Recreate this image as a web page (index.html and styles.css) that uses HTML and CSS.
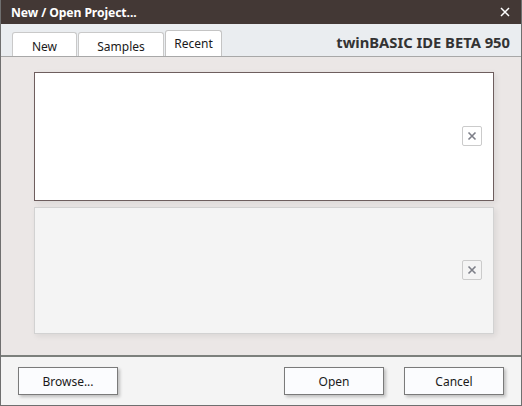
FILE: index.html
```html
<!DOCTYPE html>
<html>
<head>
<meta charset="utf-8">
<link rel="stylesheet" href="styles.css">
</head>
<body>
<div class="window">
  <div class="titlebar">
    <span class="title">New / Open Project...</span>
    <span class="close">
      <svg width="10" height="10" viewBox="0 0 10 10"><path d="M1 1L9 9M9 1L1 9" stroke="#fff" stroke-width="1.5" fill="none"/></svg>
    </span>
  </div>
  <div class="tabstrip">
    <div class="tabs">
      <div class="tab tab-new">New</div>
      <div class="tab tab-samples">Samples</div>
      <div class="tab tab-recent active">Recent</div>
    </div>
    <div class="brand">twinBASIC IDE BETA 950</div>
  </div>
  <div class="content">
    <div class="card selected">
      <div class="remove"><svg width="10" height="10" viewBox="0 0 10 10"><path d="M1.5 1.5L8.5 8.5M8.5 1.5L1.5 8.5" stroke="#7d7f88" stroke-width="1.6" fill="none"/></svg></div>
    </div>
    <div class="card">
      <div class="remove"><svg width="10" height="10" viewBox="0 0 10 10"><path d="M1.5 1.5L8.5 8.5M8.5 1.5L1.5 8.5" stroke="#7d7f88" stroke-width="1.6" fill="none"/></svg></div>
    </div>
  </div>
  <div class="footer">
    <button class="btn">Browse...</button>
    <div class="spacer"></div>
    <button class="btn">Open</button>
    <button class="btn">Cancel</button>
  </div>
</div>
</body>
</html>
```
FILE: styles.css
```css
html, body {
  margin: 0;
  padding: 0;
  background: #ffffff;
}
body {
  font-family: "Noto Sans", "Open Sans", sans-serif;
  font-size: 12px;
  color: #1a1a1a;
}
.window {
  width: 522px;
  height: 406px;
  box-sizing: border-box;
  border-left: 1px solid #6f6f6f;
  border-right: 1px solid #6f6f6f;
  border-bottom: 1px solid #6f6f6f;
  display: flex;
  flex-direction: column;
}
.titlebar {
  height: 24px;
  flex: none;
  background: #433835;
  color: #ffffff;
  display: flex;
  align-items: center;
  justify-content: space-between;
  padding: 0 11px 0 10px;
}
.title {
  font-weight: bold;
  font-size: 12.2px;
  letter-spacing: -0.1px;
}
.close {
  display: flex;
  align-items: center;
}
.tabstrip {
  height: 33px;
  flex: none;
  box-sizing: border-box;
  background: #eaedf0;
  border-bottom: 1px solid #a8a8a8;
  display: flex;
  align-items: flex-end;
  justify-content: space-between;
  padding: 0 11px 0 11px;
}
.tabs {
  display: flex;
  align-items: flex-end;
  gap: 1px;
}
.tab {
  height: 24px;
  box-sizing: border-box;
  background: #ffffff;
  border: 1px solid #c9c9c9;
  border-bottom: none;
  border-radius: 3px 3px 0 0;
  display: flex;
  align-items: center;
  justify-content: center;
  padding-top: 3px;
  font-size: 12px;
}
.tab-new { width: 65px; }
.tab-samples { width: 86px; }
.tab-recent { width: 57px; }
.tab.active {
  height: 26px;
  padding-top: 0;
  border-color: #c4c4c4;
}
.brand {
  font-weight: bold;
  font-size: 14.75px;
  color: #333333;
  align-self: center;
  padding-top: 3px;
}
.content {
  flex: 1;
  background: #ebe7e6;
  padding: 15px 27px 0 33px;
  display: flex;
  flex-direction: column;
  gap: 6px;
  border-bottom: 2px solid #7c807c;
}
.card {
  height: 127px;
  flex: none;
  box-sizing: border-box;
  background: #f4f4f4;
  border: 1px solid #d2d2d2;
  display: flex;
  align-items: center;
  justify-content: flex-end;
  padding-right: 11px;
  box-shadow: 2px 2px 6px rgba(0, 0, 0, 0.08);
}
.card.selected {
  height: 129px;
  background: #ffffff;
  border-color: #6e5e5e;
}
.remove {
  width: 20px;
  height: 20px;
  box-sizing: border-box;
  border: 1px solid #cbcbcb;
  border-radius: 2px;
  background: transparent;
  display: flex;
  align-items: center;
  justify-content: center;
  margin-top: -1px;
}
.footer {
  height: 48px;
  flex: none;
  box-sizing: border-box;
  background: #f4f4f4;
  display: flex;
  align-items: flex-start;
  padding: 10px 17px 0 17px;
  gap: 20px;
}
.spacer {
  flex: 1;
}
.btn {
  width: 100px;
  height: 28px;
  box-sizing: border-box;
  background: #fbfcfe;
  border: 1px solid #7a7a7a;
  border-radius: 0;
  box-shadow: 2px 2px 3px rgba(0, 0, 0, 0.22);
  font-family: "Noto Sans", "Open Sans", sans-serif;
  font-size: 12px;
  color: #1a1a1a;
  padding: 0;
}
```
